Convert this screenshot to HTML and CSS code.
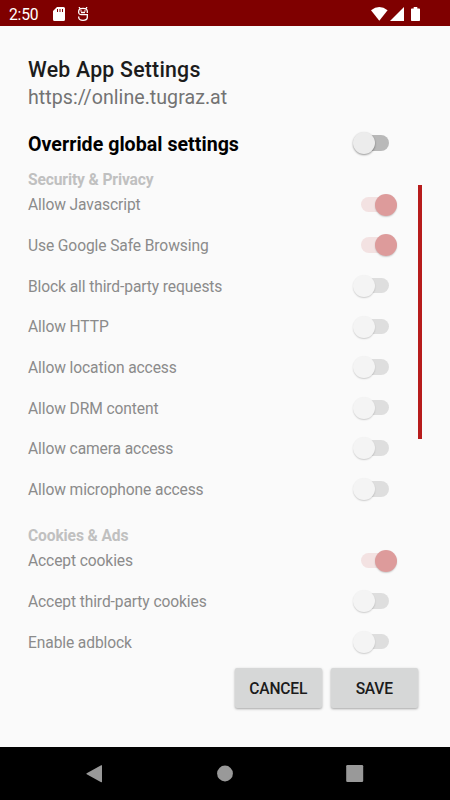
FILE: index.html
```
<!DOCTYPE html>
<html lang="en">
<head>
    <meta charset="UTF-8">
    <meta name="viewport" content="width=device-width, initial-scale=1.0">
    <title>Web App Settings</title>
    <link rel="stylesheet" href="styles.css">
</head>
<body>
    <header class="status-bar">
        <span class="clock">2:50</span>
        <svg class="sd-icon" width="12" height="14" viewBox="0 0 12 14">
            <path fill="#fff" fill-rule="evenodd" d="M4 0h6.500Q12 0 12 1.500v11Q12 14 10.500 14h-9Q0 14 0 12.500V4ZM4 2v3h1V2ZM6.500 2v3h1V2ZM9 2v3h1V2Z"/>
        </svg>
        <svg class="debug-icon" width="12" height="14" viewBox="0 0 12 14" fill="none" stroke="#fff" stroke-width="1.300">
            <path d="M2 0l1 1.500M10 0L9 1.500M10.300 6V4Q10 1.300 6 1.300T1.700 4v2Q2 7.600 4 7.600H11M10.300 7.600v3Q10 13.300 6 13.300T1.700 10.500V9.500"/>
            <path d="M4 3.300v1.200M8 3.300v1.200M4 5.500h4"/>
        </svg>
        <div class="signals">
            <svg width="17" height="14" viewBox="0 0 17 14">
                <path fill="#fff" d="M0 3.300Q8.300-3.300 16.600 3.300L8.300 13.800Z"/>
            </svg>
            <svg width="14" height="14" viewBox="0 0 14 14">
                <path fill="#fff" d="M14 0v14H0Z"/>
            </svg>
            <svg class="battery" width="9" height="14" viewBox="0 0 9 14">
                <path fill="#fff" d="M2.700 0h3.600v1.400H8.200q.8 0 .8.800v11q0 .8-.8.800H.8q-.8 0-.8-.8v-11q0-.8.8-.8h1.900Z"/>
            </svg>
        </div>
    </header>

    <main class="settings">
        <h1>Web App Settings</h1>
        <p class="url">https://online.tugraz.at</p>

        <div class="row override">
            <span>Override global settings</span>
            <span class="switch"></span>
        </div>

        <div class="options">
            <h2>Security &amp; Privacy</h2>
            <div class="group">
                <div class="row"><span>Allow Javascript</span><span class="switch on"></span></div>
                <div class="row"><span>Use Google Safe Browsing</span><span class="switch on"></span></div>
                <div class="row"><span>Block all third-party requests</span><span class="switch"></span></div>
                <div class="row"><span>Allow HTTP</span><span class="switch"></span></div>
                <div class="row"><span>Allow location access</span><span class="switch"></span></div>
                <div class="row"><span>Allow DRM content</span><span class="switch"></span></div>
                <div class="row"><span>Allow camera access</span><span class="switch"></span></div>
                <div class="row"><span>Allow microphone access</span><span class="switch"></span></div>
            </div>

            <h2>Cookies &amp; Ads</h2>
            <div class="group">
                <div class="row"><span>Accept cookies</span><span class="switch on"></span></div>
                <div class="row"><span>Accept third-party cookies</span><span class="switch"></span></div>
                <div class="row"><span>Enable adblock</span><span class="switch"></span></div>
            </div>
            <div class="scrollbar"></div>
        </div>

        <div class="buttons">
            <button>CANCEL</button>
            <button>SAVE</button>
        </div>
    </main>

    <nav class="nav-bar">
        <svg width="18" height="18" viewBox="0 0 18 18"><path fill="#999" d="M17 .3v16.800q-.6.300-1.300-.1L1.700 9.200q-.8-.5 0-1L15.700.400q.7-.4 1.300-.1Z"/></svg>
        <svg width="18" height="18" viewBox="0 0 18 18"><circle cx="9" cy="8.500" r="7.900" fill="#999"/></svg>
        <svg width="18" height="18" viewBox="0 0 18 18"><rect x=".2" y="0" width="17" height="17" rx="1.200" fill="#999"/></svg>
    </nav>
</body>
</html>
```
FILE: styles.css
```
body {
    margin: 0;
    height: 800px;
    display: flex;
    flex-direction: column;
    overflow: hidden;
    background: #fafafa;
    font-family: Roboto, sans-serif;
}

.status-bar {
    height: 26px;
    box-sizing: border-box;
    padding: 1px 30px 0 9px;
    display: flex;
    align-items: center;
    background: #7f0000;
    color: #fff;
}

.clock {
    width: 44px;
    padding-top: 2px;
    font-size: 15.7px;
    line-height: 20px;
    letter-spacing: -0.2px;
}

.debug-icon {
    margin-left: 12px;
}

.signals {
    display: flex;
    gap: 2px;
    margin-left: auto;
}

.battery {
    margin-left: 5px;
}

.settings {
    height: 721px;
    box-sizing: border-box;
    padding: 31px 28px 0;
}

h1 {
    margin: 0;
    font-size: 21.3px;
    font-weight: 500;
    line-height: 26px;
    letter-spacing: 0.22px;
    color: #1c1c1c;
}

.url {
    margin: 0;
    padding-top: 1px;
    font-size: 19.6px;
    line-height: 28px;
    letter-spacing: 0.03px;
    color: #737373;
}

.row {
    height: 22px;
    display: flex;
    align-items: center;
    justify-content: space-between;
    padding-right: 25px;
    font-size: 15.6px;
    line-height: 22px;
    letter-spacing: -0.11px;
    color: #8b8b8b;
}

.row span:first-child {
    padding-top: 2px;
}

.override {
    margin-top: 20px;
    font-size: 19.6px;
    font-weight: 700;
    letter-spacing: 0.03px;
    color: #000;
}

.override span:first-child {
    padding-top: 3px;
}

/* Track and thumb */
.switch {
    position: relative;
    width: 28.3px;
    height: 15.5px;
    margin-right: 8px;
    border-radius: 8px;
    background: #dedede;
}

.switch::after {
    content: "";
    position: absolute;
    top: -3px;
    left: -8px;
    width: 22px;
    height: 22px;
    border-radius: 50%;
    background: #f4f4f4;
    box-shadow: 0 1px 1.5px rgba(0, 0, 0, 0.18);
}

.switch.on {
    background: #f3e2e2;
}

.switch.on::after {
    left: 14px;
    background: #dd9b9b;
}

.override .switch {
    background: #b9b9b9;
}

.override .switch::after {
    background: #ececec;
    box-shadow: 0 1px 2px rgba(0, 0, 0, 0.4);
}

.options {
    position: relative;
    height: 498px;
    margin-top: 16px;
}

h2 {
    margin: 0 0 3.3px;
    font-size: 15.6px;
    font-weight: 700;
    line-height: 20px;
    letter-spacing: -0.13px;
    color: #c0c0c0;
}

.group {
    display: flex;
    flex-direction: column;
    gap: 18.67px;
    margin-bottom: 26.2px;
}

.scrollbar {
    position: absolute;
    top: 15px;
    right: 0;
    width: 4px;
    height: 254px;
    background: #b71c1c;
}

.buttons {
    display: flex;
    justify-content: flex-end;
    gap: 8.5px;
    padding-right: 4px;
}

button {
    width: 87.5px;
    height: 40px;
    padding: 1px 0 0;
    border: none;
    border-radius: 2px;
    background: #d6d7d7;
    box-shadow: 0 1px 2.5px rgba(0, 0, 0, 0.35);
    font-family: inherit;
    font-size: 15.6px;
    font-weight: 500;
    letter-spacing: -0.2px;
    color: #1b1b1b;
}

.nav-bar {
    height: 53px;
    display: flex;
    align-items: center;
    justify-content: space-between;
    box-sizing: border-box;
    padding: 0 86px 0 85px;
    background: #000;
}
```
